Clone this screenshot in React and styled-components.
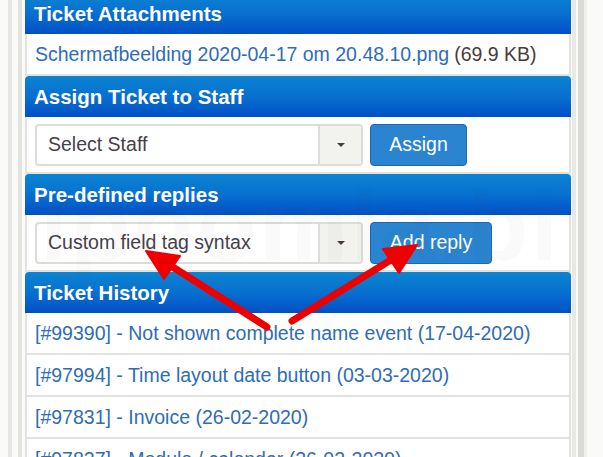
import React from 'react'
import styled, { createGlobalStyle } from 'styled-components'

const GlobalStyle = createGlobalStyle`
    html, body {
        margin: 0;
        padding: 0;
        background: #fafaf8;
        font-family: "Liberation Sans", Arial, sans-serif;
        overflow: hidden;
    }
`

const Page = styled.div`
    position: relative;
    width: 603px;
    height: 457px;
    overflow: hidden;
    display: flex;
    flex-direction: row;
    background: #fafaf8;
`

const Rail = styled.div`
    width: ${props => props.w}px;
    margin-left: ${props => props.gap}px;
    background: ${props => props.color};
    flex-shrink: 0;
`

const Panel = styled.div`
    display: flex;
    flex-direction: column;
    align-self: flex-start;
    width: 546px;
    margin-left: 3px;
    margin-top: -7px;
    flex-shrink: 0;

    & > * {
        flex-shrink: 0;
    }
`

const Header = styled.div`
    height: 41px;
    display: flex;
    align-items: center;
    padding-left: 9px;
    border-radius: 4px 4px 0 0;
    background: linear-gradient(to bottom, #0b84d2 0%, #0870cf 50%, #0050c6 100%);
    color: #ffffff;
    font-weight: bold;
    font-size: 20.5px;
`

const Row = styled.div`
    height: 40px;
    display: flex;
    align-items: center;
    padding-left: 8px;
    background: #ffffff;
    border: 2px solid #e2e2de;
    border-top: none;
    font-size: 19.5px;
    white-space: nowrap;
`

const Link = styled.span`
    color: #2e6db6;
`

const Size = styled.span`
    color: #4a3b3b;
    margin-left: 5px;
`

const FormRow = styled.div`
    display: flex;
    align-items: center;
    gap: 7px;
    height: 55px;
    padding-left: 8px;
    background: #ffffff;
    border: 2px solid #e2e2de;
    border-top: none;
`

const Select = styled.div`
    display: flex;
    width: 328px;
    height: 42px;
    box-sizing: border-box;
    border: 2px solid #dcdcd8;
    border-radius: 4px;
    background: #ffffff;
    overflow: hidden;
`

const SelectText = styled.div`
    flex: 1;
    display: flex;
    align-items: center;
    padding-left: 11px;
    font-size: 19.5px;
    color: #463f4c;
`

const Caret = styled.div`
    width: 41px;
    border-left: 2px solid #dcdcd8;
    background: #f2f2ee;
    display: flex;
    align-items: center;
    justify-content: center;

    &::after {
        content: '';
        border-left: 4px solid transparent;
        border-right: 4px solid transparent;
        border-top: 4px solid #4a3a40;
    }
`

const Button = styled.button`
    height: 42px;
    width: ${props => props.w}px;
    border: 1px solid #1c68b0;
    border-radius: 4px;
    background: #2a84d0;
    color: #ffffff;
    font-family: "Liberation Sans", Arial, sans-serif;
    font-size: 19.5px;
    padding: 0;
`

const Watermark = styled.div`
    position: absolute;
    left: 40px;
    top: 168px;
    font-size: 100px;
    font-weight: bold;
    color: rgba(90, 90, 60, 0.028);
    letter-spacing: 2px;
    pointer-events: none;
    white-space: nowrap;
`

const Arrows = styled.svg`
    position: absolute;
    left: 0;
    top: 0;
    pointer-events: none;
`

const history = [
    ['#99390', 'Not shown complete name event (17-04-2020)'],
    ['#97994', 'Time layout date button (03-03-2020)'],
    ['#97831', 'Invoice (26-02-2020)'],
    ['#97827', 'Module / calendar (26-02-2020)'],
]

export default function App() {
    return (
        <>
            <GlobalStyle />
            <Page>
                <Rail gap={8} w={4} color="#e6e6e2" />
                <Rail gap={6} w={4} color="#e2e2de" />
                <Panel>
                    <Header>Ticket Attachments</Header>
                    <Row>
                        <Link>Schermafbeelding 2020-04-17 om 20.48.10.png</Link>
                        <Size>(69.9 KB)</Size>
                    </Row>
                    <Header>Assign Ticket to Staff</Header>
                    <FormRow>
                        <Select>
                            <SelectText>Select Staff</SelectText>
                            <Caret />
                        </Select>
                        <Button w={97}>Assign</Button>
                    </FormRow>
                    <Header>Pre-defined replies</Header>
                    <FormRow>
                        <Select>
                            <SelectText>Custom field tag syntax</SelectText>
                            <Caret />
                        </Select>
                        <Button w={122}>Add reply</Button>
                    </FormRow>
                    <Header>Ticket History</Header>
                    {history.map(([id, title]) => (
                        <Row key={id}>
                            <Link>[{id}] - {title}</Link>
                        </Row>
                    ))}
                </Panel>
                <Rail gap={1} w={4} color="#e8e8e4" />
                <Rail gap={2} w={6} color="#dadad6" />
                <Rail gap={0} w={3} color="#efefeb" />
                <Watermark>ipoomla.bi</Watermark>
                <Arrows width="603" height="457" viewBox="0 0 603 457">
                    <g fill="#ee0000" stroke="#ee0000" strokeLinecap="round">
                        <line x1="267" y1="327" x2="168" y2="264" strokeWidth="7" />
                        <polygon points="146,251 180,256 164,279" strokeWidth="2" strokeLinejoin="round" />
                        <line x1="292" y1="321" x2="394" y2="258" strokeWidth="7" />
                        <polygon points="417,245 383,249 399,273" strokeWidth="2" strokeLinejoin="round" />
                    </g>
                </Arrows>
            </Page>
        </>
    )
}
